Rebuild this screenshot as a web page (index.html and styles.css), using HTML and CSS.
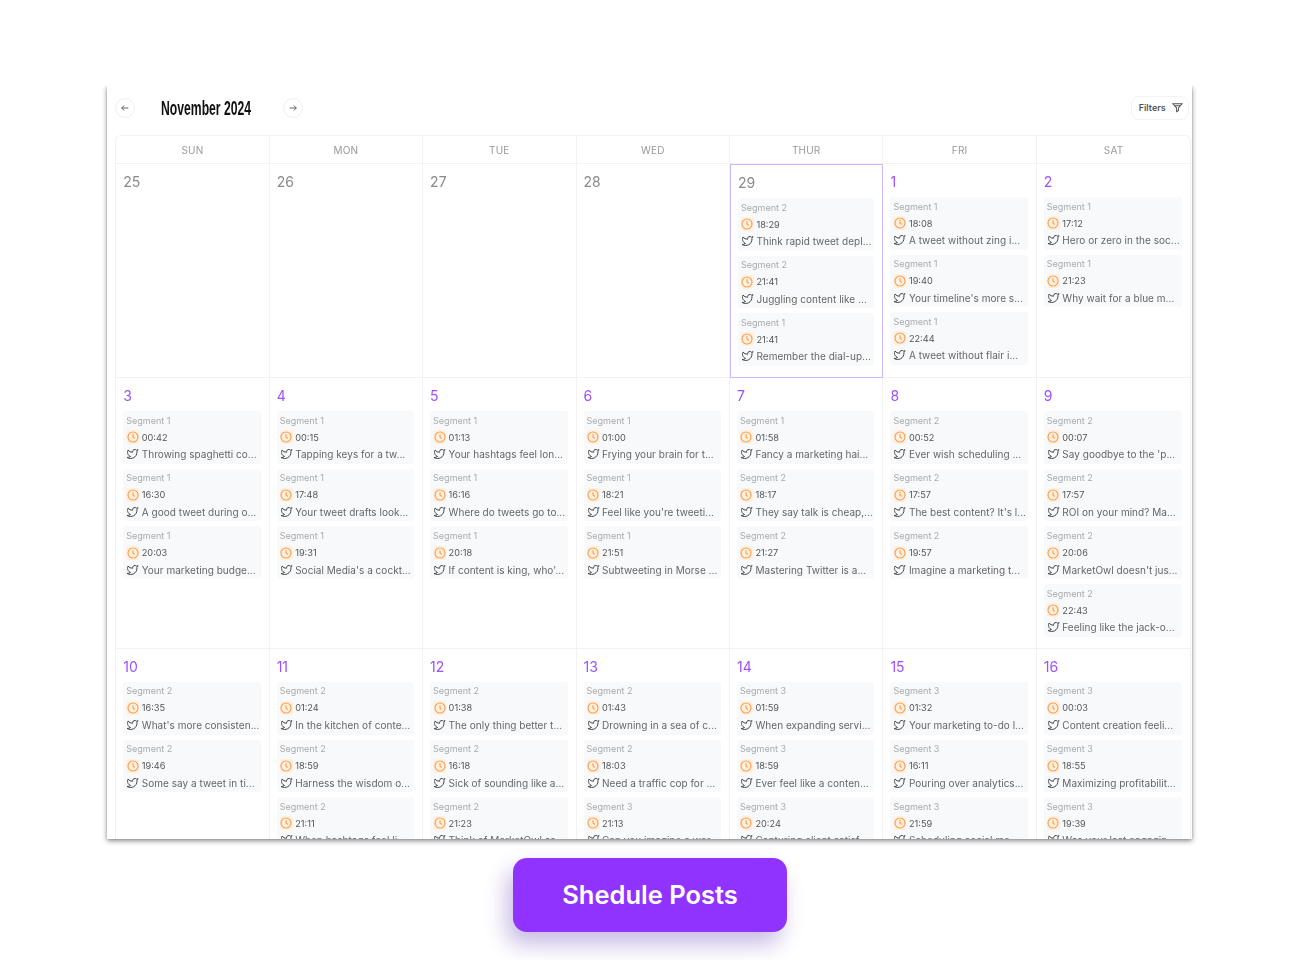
FILE: index.html
```html
<!DOCTYPE html>
<html lang="en">
<head>
<meta charset="utf-8">
<title>Schedule Posts</title>
<link rel="stylesheet" href="styles.css">
</head>
<body>
<svg class="defs" width="0" height="0" aria-hidden="true">
  <symbol id="clock" viewBox="0 0 24 24"><circle cx="12" cy="12" r="10"/><path d="M12 6.5V12l3.5 3"/></symbol>
  <symbol id="bird" viewBox="0 0 24 24"><path d="M23 3a10.9 10.9 0 0 1-3 1.53 4.48 4.48 0 0 0-7.86 3v1A10.66 10.66 0 0 1 3 4s-4 9 5 13a11.64 11.64 0 0 1-7 2c9 5 20 0 20-11.5a4.5 4.5 0 0 0-.08-.83A7.72 7.72 0 0 0 23 3z"/></symbol>
</svg>
<main class="card">
  <header class="toolbar">
    <button class="round"><svg viewBox="0 0 24 24"><path d="M20 12H4M10 6l-6 6 6 6"/></svg></button>
    <h1 class="title">November 2024</h1>
    <button class="round"><svg viewBox="0 0 24 24"><path d="M4 12h16M14 6l6 6-6 6"/></svg></button>
    <button class="filters">Filters <svg viewBox="0 0 24 24"><path d="M2 4h20l-8 9v6l-4 2v-8zM6 8h12"/></svg></button>
  </header>
  <section class="grid">
    <div class="dow">SUN</div><div class="dow">MON</div><div class="dow">TUE</div><div class="dow">WED</div><div class="dow">THUR</div><div class="dow">FRI</div><div class="dow">SAT</div>

    <div class="cell"><div class="date muted">25</div></div>
    <div class="cell"><div class="date muted">26</div></div>
    <div class="cell"><div class="date muted">27</div></div>
    <div class="cell"><div class="date muted">28</div></div>
    <div class="cell today"><div class="date muted">29</div>
      <article class="ev"><p class="seg">Segment 2</p><p class="time"><span class="ck"><svg><use href="#clock"/></svg></span>18:29</p><p class="txt"><svg><use href="#bird"/></svg>Think rapid tweet depl...</p></article>
      <article class="ev"><p class="seg">Segment 2</p><p class="time"><span class="ck"><svg><use href="#clock"/></svg></span>21:41</p><p class="txt"><svg><use href="#bird"/></svg>Juggling content like ...</p></article>
      <article class="ev"><p class="seg">Segment 1</p><p class="time"><span class="ck"><svg><use href="#clock"/></svg></span>21:41</p><p class="txt"><svg><use href="#bird"/></svg>Remember the dial-up...</p></article>
    </div>
    <div class="cell"><div class="date">1</div>
      <article class="ev"><p class="seg">Segment 1</p><p class="time"><span class="ck"><svg><use href="#clock"/></svg></span>18:08</p><p class="txt"><svg><use href="#bird"/></svg>A tweet without zing i...</p></article>
      <article class="ev"><p class="seg">Segment 1</p><p class="time"><span class="ck"><svg><use href="#clock"/></svg></span>19:40</p><p class="txt"><svg><use href="#bird"/></svg>Your timeline's more s...</p></article>
      <article class="ev"><p class="seg">Segment 1</p><p class="time"><span class="ck"><svg><use href="#clock"/></svg></span>22:44</p><p class="txt"><svg><use href="#bird"/></svg>A tweet without flair i...</p></article>
    </div>
    <div class="cell"><div class="date">2</div>
      <article class="ev"><p class="seg">Segment 1</p><p class="time"><span class="ck"><svg><use href="#clock"/></svg></span>17:12</p><p class="txt"><svg><use href="#bird"/></svg>Hero or zero in the soc...</p></article>
      <article class="ev"><p class="seg">Segment 1</p><p class="time"><span class="ck"><svg><use href="#clock"/></svg></span>21:23</p><p class="txt"><svg><use href="#bird"/></svg>Why wait for a blue m...</p></article>
    </div>

    <div class="cell"><div class="date">3</div>
      <article class="ev"><p class="seg">Segment 1</p><p class="time"><span class="ck"><svg><use href="#clock"/></svg></span>00:42</p><p class="txt"><svg><use href="#bird"/></svg>Throwing spaghetti co...</p></article>
      <article class="ev"><p class="seg">Segment 1</p><p class="time"><span class="ck"><svg><use href="#clock"/></svg></span>16:30</p><p class="txt"><svg><use href="#bird"/></svg>A good tweet during o...</p></article>
      <article class="ev"><p class="seg">Segment 1</p><p class="time"><span class="ck"><svg><use href="#clock"/></svg></span>20:03</p><p class="txt"><svg><use href="#bird"/></svg>Your marketing budge...</p></article>
    </div>
    <div class="cell"><div class="date">4</div>
      <article class="ev"><p class="seg">Segment 1</p><p class="time"><span class="ck"><svg><use href="#clock"/></svg></span>00:15</p><p class="txt"><svg><use href="#bird"/></svg>Tapping keys for a tw...</p></article>
      <article class="ev"><p class="seg">Segment 1</p><p class="time"><span class="ck"><svg><use href="#clock"/></svg></span>17:48</p><p class="txt"><svg><use href="#bird"/></svg>Your tweet drafts look...</p></article>
      <article class="ev"><p class="seg">Segment 1</p><p class="time"><span class="ck"><svg><use href="#clock"/></svg></span>19:31</p><p class="txt"><svg><use href="#bird"/></svg>Social Media's a cockt...</p></article>
    </div>
    <div class="cell"><div class="date">5</div>
      <article class="ev"><p class="seg">Segment 1</p><p class="time"><span class="ck"><svg><use href="#clock"/></svg></span>01:13</p><p class="txt"><svg><use href="#bird"/></svg>Your hashtags feel lon...</p></article>
      <article class="ev"><p class="seg">Segment 1</p><p class="time"><span class="ck"><svg><use href="#clock"/></svg></span>16:16</p><p class="txt"><svg><use href="#bird"/></svg>Where do tweets go to...</p></article>
      <article class="ev"><p class="seg">Segment 1</p><p class="time"><span class="ck"><svg><use href="#clock"/></svg></span>20:18</p><p class="txt"><svg><use href="#bird"/></svg>If content is king, who'...</p></article>
    </div>
    <div class="cell"><div class="date">6</div>
      <article class="ev"><p class="seg">Segment 1</p><p class="time"><span class="ck"><svg><use href="#clock"/></svg></span>01:00</p><p class="txt"><svg><use href="#bird"/></svg>Frying your brain for t...</p></article>
      <article class="ev"><p class="seg">Segment 1</p><p class="time"><span class="ck"><svg><use href="#clock"/></svg></span>18:21</p><p class="txt"><svg><use href="#bird"/></svg>Feel like you're tweeti...</p></article>
      <article class="ev"><p class="seg">Segment 1</p><p class="time"><span class="ck"><svg><use href="#clock"/></svg></span>21:51</p><p class="txt"><svg><use href="#bird"/></svg>Subtweeting in Morse ...</p></article>
    </div>
    <div class="cell"><div class="date">7</div>
      <article class="ev"><p class="seg">Segment 1</p><p class="time"><span class="ck"><svg><use href="#clock"/></svg></span>01:58</p><p class="txt"><svg><use href="#bird"/></svg>Fancy a marketing hai...</p></article>
      <article class="ev"><p class="seg">Segment 2</p><p class="time"><span class="ck"><svg><use href="#clock"/></svg></span>18:17</p><p class="txt"><svg><use href="#bird"/></svg>They say talk is cheap,...</p></article>
      <article class="ev"><p class="seg">Segment 2</p><p class="time"><span class="ck"><svg><use href="#clock"/></svg></span>21:27</p><p class="txt"><svg><use href="#bird"/></svg>Mastering Twitter is a...</p></article>
    </div>
    <div class="cell"><div class="date">8</div>
      <article class="ev"><p class="seg">Segment 2</p><p class="time"><span class="ck"><svg><use href="#clock"/></svg></span>00:52</p><p class="txt"><svg><use href="#bird"/></svg>Ever wish scheduling ...</p></article>
      <article class="ev"><p class="seg">Segment 2</p><p class="time"><span class="ck"><svg><use href="#clock"/></svg></span>17:57</p><p class="txt"><svg><use href="#bird"/></svg>The best content? It's l...</p></article>
      <article class="ev"><p class="seg">Segment 2</p><p class="time"><span class="ck"><svg><use href="#clock"/></svg></span>19:57</p><p class="txt"><svg><use href="#bird"/></svg>Imagine a marketing t...</p></article>
    </div>
    <div class="cell"><div class="date">9</div>
      <article class="ev"><p class="seg">Segment 2</p><p class="time"><span class="ck"><svg><use href="#clock"/></svg></span>00:07</p><p class="txt"><svg><use href="#bird"/></svg>Say goodbye to the 'p...</p></article>
      <article class="ev"><p class="seg">Segment 2</p><p class="time"><span class="ck"><svg><use href="#clock"/></svg></span>17:57</p><p class="txt"><svg><use href="#bird"/></svg>ROI on your mind? Ma...</p></article>
      <article class="ev"><p class="seg">Segment 2</p><p class="time"><span class="ck"><svg><use href="#clock"/></svg></span>20:06</p><p class="txt"><svg><use href="#bird"/></svg>MarketOwl doesn't jus...</p></article>
      <article class="ev"><p class="seg">Segment 2</p><p class="time"><span class="ck"><svg><use href="#clock"/></svg></span>22:43</p><p class="txt"><svg><use href="#bird"/></svg>Feeling like the jack-o...</p></article>
    </div>

    <div class="cell"><div class="date">10</div>
      <article class="ev"><p class="seg">Segment 2</p><p class="time"><span class="ck"><svg><use href="#clock"/></svg></span>16:35</p><p class="txt"><svg><use href="#bird"/></svg>What's more consisten...</p></article>
      <article class="ev"><p class="seg">Segment 2</p><p class="time"><span class="ck"><svg><use href="#clock"/></svg></span>19:46</p><p class="txt"><svg><use href="#bird"/></svg>Some say a tweet in ti...</p></article>
    </div>
    <div class="cell"><div class="date">11</div>
      <article class="ev"><p class="seg">Segment 2</p><p class="time"><span class="ck"><svg><use href="#clock"/></svg></span>01:24</p><p class="txt"><svg><use href="#bird"/></svg>In the kitchen of conte...</p></article>
      <article class="ev"><p class="seg">Segment 2</p><p class="time"><span class="ck"><svg><use href="#clock"/></svg></span>18:59</p><p class="txt"><svg><use href="#bird"/></svg>Harness the wisdom o...</p></article>
      <article class="ev"><p class="seg">Segment 2</p><p class="time"><span class="ck"><svg><use href="#clock"/></svg></span>21:11</p><p class="txt"><svg><use href="#bird"/></svg>When hashtags feel li...</p></article>
    </div>
    <div class="cell"><div class="date">12</div>
      <article class="ev"><p class="seg">Segment 2</p><p class="time"><span class="ck"><svg><use href="#clock"/></svg></span>01:38</p><p class="txt"><svg><use href="#bird"/></svg>The only thing better t...</p></article>
      <article class="ev"><p class="seg">Segment 2</p><p class="time"><span class="ck"><svg><use href="#clock"/></svg></span>16:18</p><p class="txt"><svg><use href="#bird"/></svg>Sick of sounding like a...</p></article>
      <article class="ev"><p class="seg">Segment 2</p><p class="time"><span class="ck"><svg><use href="#clock"/></svg></span>21:23</p><p class="txt"><svg><use href="#bird"/></svg>Think of MarketOwl as...</p></article>
    </div>
    <div class="cell"><div class="date">13</div>
      <article class="ev"><p class="seg">Segment 2</p><p class="time"><span class="ck"><svg><use href="#clock"/></svg></span>01:43</p><p class="txt"><svg><use href="#bird"/></svg>Drowning in a sea of c...</p></article>
      <article class="ev"><p class="seg">Segment 2</p><p class="time"><span class="ck"><svg><use href="#clock"/></svg></span>18:03</p><p class="txt"><svg><use href="#bird"/></svg>Need a traffic cop for ...</p></article>
      <article class="ev"><p class="seg">Segment 3</p><p class="time"><span class="ck"><svg><use href="#clock"/></svg></span>21:13</p><p class="txt"><svg><use href="#bird"/></svg>Can you imagine a wor...</p></article>
    </div>
    <div class="cell"><div class="date">14</div>
      <article class="ev"><p class="seg">Segment 3</p><p class="time"><span class="ck"><svg><use href="#clock"/></svg></span>01:59</p><p class="txt"><svg><use href="#bird"/></svg>When expanding servi...</p></article>
      <article class="ev"><p class="seg">Segment 3</p><p class="time"><span class="ck"><svg><use href="#clock"/></svg></span>18:59</p><p class="txt"><svg><use href="#bird"/></svg>Ever feel like a conten...</p></article>
      <article class="ev"><p class="seg">Segment 3</p><p class="time"><span class="ck"><svg><use href="#clock"/></svg></span>20:24</p><p class="txt"><svg><use href="#bird"/></svg>Capturing client satisf...</p></article>
    </div>
    <div class="cell"><div class="date">15</div>
      <article class="ev"><p class="seg">Segment 3</p><p class="time"><span class="ck"><svg><use href="#clock"/></svg></span>01:32</p><p class="txt"><svg><use href="#bird"/></svg>Your marketing to-do l...</p></article>
      <article class="ev"><p class="seg">Segment 3</p><p class="time"><span class="ck"><svg><use href="#clock"/></svg></span>16:11</p><p class="txt"><svg><use href="#bird"/></svg>Pouring over analytics...</p></article>
      <article class="ev"><p class="seg">Segment 3</p><p class="time"><span class="ck"><svg><use href="#clock"/></svg></span>21:59</p><p class="txt"><svg><use href="#bird"/></svg>Scheduling social me...</p></article>
    </div>
    <div class="cell"><div class="date">16</div>
      <article class="ev"><p class="seg">Segment 3</p><p class="time"><span class="ck"><svg><use href="#clock"/></svg></span>00:03</p><p class="txt"><svg><use href="#bird"/></svg>Content creation feeli...</p></article>
      <article class="ev"><p class="seg">Segment 3</p><p class="time"><span class="ck"><svg><use href="#clock"/></svg></span>18:55</p><p class="txt"><svg><use href="#bird"/></svg>Maximizing profitabilit...</p></article>
      <article class="ev"><p class="seg">Segment 3</p><p class="time"><span class="ck"><svg><use href="#clock"/></svg></span>19:39</p><p class="txt"><svg><use href="#bird"/></svg>Was your last engagin...</p></article>
    </div>
  </section>
</main>
<button class="cta">Shedule Posts</button>
</body>
</html>
```

FILE: styles.css
```css
* { box-sizing: border-box; }
html, body { margin: 0; height: 100%; }
body {
  background: #fff;
  font-family: Inter, "Noto Sans", sans-serif;
  display: flex;
  flex-direction: column;
  align-items: center;
  padding-top: 86px;
  overflow: hidden;
}
.defs { position: absolute; }
.card {
  width: 1085px;
  height: 753px;
  margin-left: -0.5px;
  flex: none;
  overflow: hidden;
  background: #fff;
  padding: 0 1px 0 8px;
  box-shadow: 0 2px 5px rgba(0, 0, 0, .45), 0 0 2px rgba(0, 0, 0, .18);
  clip-path: inset(0 -8px -12px -8px);
  filter: blur(.4px);
}
.toolbar {
  height: 49px;
  display: flex;
  align-items: center;
  padding-bottom: 5px;
}
.round {
  width: 20px;
  height: 20px;
  flex: none;
  padding: 0;
  display: flex;
  align-items: center;
  justify-content: center;
  background: #fff;
  border: 1px solid #f0f0f2;
  border-radius: 50%;
}
.round svg { width: 10px; height: 10px; fill: none; stroke: #444; stroke-width: 2; }
.title {
  width: 122px;
  margin: 0 0 0 26px;
  font: 700 19.5px/20px "Liberation Sans", sans-serif;
  color: #111;
  white-space: nowrap;
  transform: scaleX(.625);
  transform-origin: left center;
}
.filters {
  margin-left: auto;
  margin-right: 2px;
  width: 58px;
  height: 24px;
  padding: 0 0 1px 1px;
  display: flex;
  align-items: center;
  justify-content: center;
  gap: 6px;
  background: #fff;
  border: 1px solid #f3f3f5;
  border-radius: 8px;
  font: 600 9px/1 Inter, sans-serif;
  color: #555;
}
.filters svg { width: 11px; height: 11px; fill: none; stroke: #555; stroke-width: 2.2; }
.grid {
  display: grid;
  grid-template-columns: repeat(7, 1fr);
  border: 1px solid #f2f2f3;
  border-bottom: 0;
  border-radius: 6px 6px 0 0;
}
.dow {
  height: 28px;
  display: flex;
  align-items: center;
  justify-content: center;
  font-size: 10px;
  color: #999;
  letter-spacing: .2px;
  border-right: 1px solid #f2f2f3;
  border-bottom: 1px solid #f2f2f3;
}
.dow:nth-child(7) { border-right: 0; }
.cell {
  min-width: 0;
  padding: 0 8px 11px 7px;
  display: flex;
  flex-direction: column;
  gap: 5px;
  border-right: 1px solid #f2f2f3;
  border-bottom: 1px solid #f2f2f3;
}
.cell:nth-child(7n) { border-right: 0; }
.today { border: 1px solid #cdb8ff; }
.date {
  height: 28px;
  padding-top: 9px;
  font-size: 14px;
  line-height: 17px;
  color: #9c50ff;
}
.date.muted { color: #8a8a8a; }
.ev {
  height: 52.7px;
  flex: none;
  padding: .6px 0 0 3px;
  background: #f8f9fb;
  border-radius: 3px;
}
.ev p {
  margin: 0;
  height: 17px;
  display: flex;
  align-items: center;
  white-space: nowrap;
  overflow: hidden;
}
.seg { font-size: 9px; color: #aaa; }
.time { font-size: 9.2px; color: #555; gap: 2.5px; }
.txt { font-size: 10px; color: #666; gap: 2.5px; letter-spacing: .03px; }
.ck {
  width: 13px;
  height: 14px;
  flex: none;
  display: flex;
  align-items: center;
  justify-content: center;
  background: #fff0e2;
  border-radius: 3px;
}
.ck svg { width: 12px; height: 12px; fill: none; stroke: #fb9f4c; stroke-width: 2.3; }
.txt svg { width: 13px; height: 12px; flex: none; fill: none; stroke: #444; stroke-width: 2; }
.cta {
  margin-top: 19px;
  width: 274px;
  height: 74px;
  flex: none;
  border: 0;
  border-radius: 14px;
  background: #9033ff;
  color: #fff;
  font: 600 25.5px/1 Inter, sans-serif;
  box-shadow: -6px 12px 22px rgba(80, 40, 170, .32);
}
```
